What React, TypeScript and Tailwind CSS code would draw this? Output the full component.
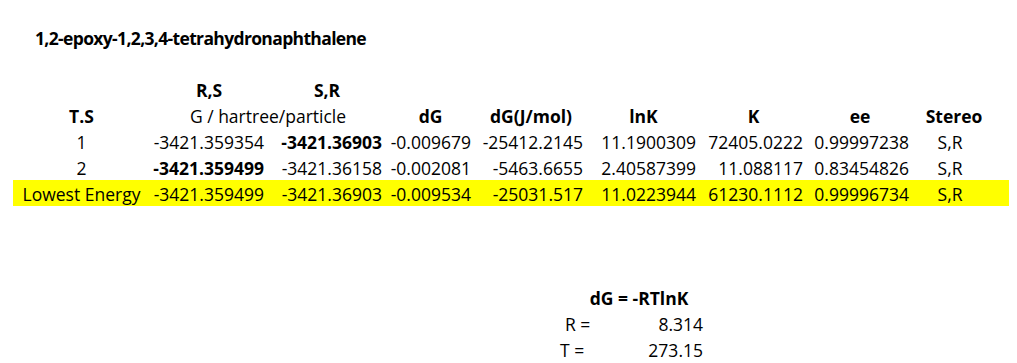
import React from 'react';

// column widths, measured from the sheet grid
const COLS = ['w-[137px]', 'w-[118px]', 'w-[118px]', 'w-[89px]', 'w-[112px]', 'w-[113px]', 'w-[107px]', 'w-[106px]', 'w-[82px]'];

type Val = { t: string; b?: boolean };

const rows: { ts: string; vals: Val[]; stereo: string; hi?: boolean }[] = [
  {
    ts: '1',
    vals: [
      { t: '-3421.359354' },
      { t: '-3421.36903', b: true },
      { t: '-0.009679' },
      { t: '-25412.2145' },
      { t: '11.1900309' },
      { t: '72405.0222' },
      { t: '0.99997238' },
    ],
    stereo: 'S,R',
  },
  {
    ts: '2',
    vals: [
      { t: '-3421.359499', b: true },
      { t: '-3421.36158' },
      { t: '-0.002081' },
      { t: '-5463.6655' },
      { t: '2.40587399' },
      { t: '11.088117' },
      { t: '0.83454826' },
    ],
    stereo: 'S,R',
  },
  {
    ts: 'Lowest Energy',
    vals: [
      { t: '-3421.359499' },
      { t: '-3421.36903' },
      { t: '-0.009534' },
      { t: '-25031.517' },
      { t: '11.0223944' },
      { t: '61230.1112' },
      { t: '0.99996734' },
    ],
    stereo: 'S,R',
    hi: true,
  },
];

const cell = 'shrink-0 h-[26px] pt-[2px] leading-[24px] whitespace-nowrap';

function Row({ children, className = '' }: { children?: React.ReactNode; className?: string }) {
  return <div className={`flex h-[26px] ${className}`}>{children}</div>;
}

export default function App() {
  const headers = ['dG', 'dG(J/mol)', 'lnK', 'K', 'ee'];
  return (
    <div className="w-[1017px] h-[363px] overflow-hidden bg-white text-black text-[17.5px] font-['Open_Sans','Noto_Sans',sans-serif] pt-[24px] pl-[13px]">
      {/* title */}
      <Row>
        <div className={`${cell} pl-[22px] font-bold tracking-[-0.65px]`}>1,2-epoxy-1,2,3,4-tetrahydronaphthalene</div>
      </Row>
      <Row />

      {/* enantiomer labels */}
      <Row>
        <div className={`${cell} ${COLS[0]}`} />
        <div className={`${cell} ${COLS[1]} text-center font-bold`}>R,S</div>
        <div className={`${cell} ${COLS[2]} text-center font-bold`}>S,R</div>
      </Row>

      {/* header */}
      <Row>
        <div className={`${cell} ${COLS[0]} text-center font-bold`}>T.S</div>
        <div className={`${cell} w-[236px] text-center`}>G / hartree/particle</div>
        {headers.map((h, i) => (
          <div key={h} className={`${cell} ${COLS[i + 3]} text-center font-bold`}>
            {h}
          </div>
        ))}
        <div className={`${cell} ${COLS[8]} text-center font-bold`}>Stereo</div>
      </Row>

      {rows.map((r) => (
        <Row key={r.ts} className={r.hi ? 'w-[996px] bg-[#ffff00]' : ''}>
          <div className={`${cell} ${COLS[0]} text-center`}>{r.ts}</div>
          {r.vals.map((v, i) => (
            <div key={i} className={`${cell} ${COLS[i + 1]} text-right pr-[4px] ${v.b ? 'font-bold' : ''}`}>
              {v.t}
            </div>
          ))}
          <div className={`${cell} ${COLS[8]} text-center pr-[8px]`}>{r.stereo}</div>
        </Row>
      ))}

      <Row />
      <Row />
      <Row />

      {/* formula block */}
      <Row>
        <div className="shrink-0 w-[574px]" />
        <div className={`${cell} ${COLS[5]} text-center pr-[9px] font-bold`}>dG = -RTlnK</div>
      </Row>
      <Row>
        <div className="shrink-0 w-[462px]" />
        <div className={`${cell} w-[112px] pl-[90px]`}>R =</div>
        <div className={`${cell} w-[116px] text-right`}>8.314</div>
      </Row>
      <Row>
        <div className="shrink-0 w-[462px]" />
        <div className={`${cell} w-[112px] pl-[85px]`}>T =</div>
        <div className={`${cell} w-[116px] text-right`}>273.15</div>
      </Row>
    </div>
  );
}
